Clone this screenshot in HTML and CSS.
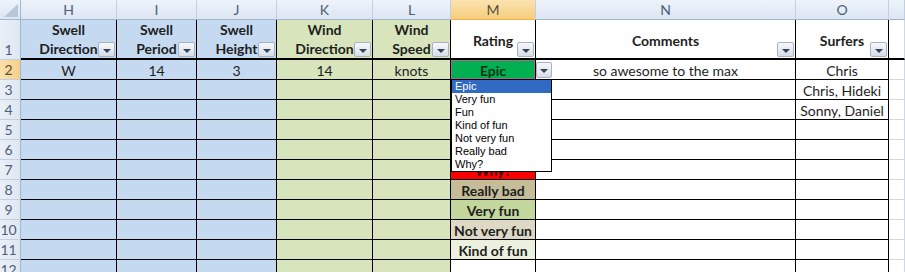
FILE: index.html
```html
<!DOCTYPE html>
<html>
<head>
<meta charset="utf-8">
<link rel="stylesheet" href="styles.css">
</head>
<body>
<div class="sheet">
  <div class="row hdr">
    <div class="corner"><span class="tri"></span></div>
    <div class="ch">H</div>
    <div class="ch">I</div>
    <div class="ch">J</div>
    <div class="ch">K</div>
    <div class="ch">L</div>
    <div class="ch active">M</div>
    <div class="ch">N</div>
    <div class="ch">O</div>
    <div class="ch"></div>
  </div>

  <div class="row r1">
    <div class="rh">1</div>
    <div class="c th blue"><span>Swell<br>Direction</span><i class="fb"></i></div>
    <div class="c th blue"><span>Swell<br>Period</span><i class="fb"></i></div>
    <div class="c th blue"><span>Swell<br>Height</span><i class="fb"></i></div>
    <div class="c th green"><span>Wind<br>Direction</span><i class="fb"></i></div>
    <div class="c th green"><span>Wind<br>Speed</span><i class="fb"></i></div>
    <div class="c th one"><span>Rating</span><i class="fb"></i></div>
    <div class="c th one"><span>Comments</span><i class="fb"></i></div>
    <div class="c th one"><span>Surfers</span><i class="fb"></i></div>
    <div class="g"></div>
  </div>

  <div class="row">
    <div class="rh active">2</div>
    <div class="c blue">W</div>
    <div class="c blue">14</div>
    <div class="c blue">3</div>
    <div class="c green">14</div>
    <div class="c green">knots</div>
    <div class="c sel epic">Epic
      <i class="vb"></i>
      <ul class="dd">
        <li class="hl">Epic</li>
        <li>Very fun</li>
        <li>Fun</li>
        <li>Kind of fun</li>
        <li>Not very fun</li>
        <li>Really bad</li>
        <li>Why?</li>
      </ul>
    </div>
    <div class="c">so awesome to the max</div>
    <div class="c">Chris</div>
    <div class="g"></div>
  </div>

  <div class="row">
    <div class="rh">3</div>
    <div class="c blue"></div><div class="c blue"></div><div class="c blue"></div>
    <div class="c green"></div><div class="c green"></div>
    <div class="c r"></div><div class="c"></div>
    <div class="c">Chris, Hideki</div>
    <div class="g"></div>
  </div>

  <div class="row">
    <div class="rh">4</div>
    <div class="c blue"></div><div class="c blue"></div><div class="c blue"></div>
    <div class="c green"></div><div class="c green"></div>
    <div class="c r"></div><div class="c"></div>
    <div class="c">Sonny, Daniel</div>
    <div class="g"></div>
  </div>

  <div class="row">
    <div class="rh">5</div>
    <div class="c blue"></div><div class="c blue"></div><div class="c blue"></div>
    <div class="c green"></div><div class="c green"></div>
    <div class="c r"></div><div class="c"></div><div class="c"></div>
    <div class="g"></div>
  </div>

  <div class="row">
    <div class="rh">6</div>
    <div class="c blue"></div><div class="c blue"></div><div class="c blue"></div>
    <div class="c green"></div><div class="c green"></div>
    <div class="c r"></div><div class="c"></div><div class="c"></div>
    <div class="g"></div>
  </div>

  <div class="row">
    <div class="rh">7</div>
    <div class="c blue"></div><div class="c blue"></div><div class="c blue"></div>
    <div class="c green"></div><div class="c green"></div>
    <div class="c r why">Why?</div><div class="c"></div><div class="c"></div>
    <div class="g"></div>
  </div>

  <div class="row">
    <div class="rh">8</div>
    <div class="c blue"></div><div class="c blue"></div><div class="c blue"></div>
    <div class="c green"></div><div class="c green"></div>
    <div class="c r bad">Really bad</div><div class="c"></div><div class="c"></div>
    <div class="g"></div>
  </div>

  <div class="row">
    <div class="rh">9</div>
    <div class="c blue"></div><div class="c blue"></div><div class="c blue"></div>
    <div class="c green"></div><div class="c green"></div>
    <div class="c r vfun">Very fun</div><div class="c"></div><div class="c"></div>
    <div class="g"></div>
  </div>

  <div class="row">
    <div class="rh">10</div>
    <div class="c blue"></div><div class="c blue"></div><div class="c blue"></div>
    <div class="c green"></div><div class="c green"></div>
    <div class="c r nvfun">Not very fun</div><div class="c"></div><div class="c"></div>
    <div class="g"></div>
  </div>

  <div class="row">
    <div class="rh">11</div>
    <div class="c blue"></div><div class="c blue"></div><div class="c blue"></div>
    <div class="c green"></div><div class="c green"></div>
    <div class="c r kfun">Kind of fun</div><div class="c"></div><div class="c"></div>
    <div class="g"></div>
  </div>

  <div class="row">
    <div class="rh">12</div>
    <div class="c blue"></div><div class="c blue"></div><div class="c blue"></div>
    <div class="c green"></div><div class="c green"></div>
    <div class="c"></div><div class="c"></div><div class="c"></div>
    <div class="g"></div>
  </div>
</div>
</body>
</html>
```

FILE: styles.css
```css
* { box-sizing: border-box; }
html, body { margin: 0; padding: 0; background: #fff; }
body { width: 905px; height: 272px; overflow: hidden; }

.sheet {
  font-family: Lato, "Liberation Sans", sans-serif;
  font-size: 14px;
  color: #1e1e1e;
}

.row {
  display: grid;
  grid-template-columns: 21px 96px 80px 80px 96px 78px 85px 260px 93px 16px;
  height: 20px;
}
.row.r1 { height: 40px; }

/* column header row */
.hdr .ch, .corner {
  background: linear-gradient(#eef3fa, #dce6f2);
  border-right: 1px solid #c3cfdf;
  border-bottom: 1px solid #9eb6ce;
  color: #4d5e78;
  font-size: 14px;
  display: flex;
  align-items: center;
  justify-content: center;
}
.hdr .ch.active {
  background: linear-gradient(#fbe3b0, #f6cd7c);
  border-bottom-color: #f2b44a;
  color: #56503f;
}
.corner { position: relative; border-right-color: #9eb6ce; }
.tri {
  position: absolute;
  right: 2px;
  bottom: 2px;
  width: 0;
  height: 0;
  border-left: 14px solid transparent;
  border-bottom: 13px solid #b7c6d9;
}

/* row headers */
.rh {
  background: linear-gradient(90deg, #eaf0f8, #dfe7f2);
  border-right: 1px solid #9eb6ce;
  border-bottom: 1px solid #c3cfdf;
  color: #4d5e78;
  font-size: 14px;
  line-height: 18px;
  display: flex;
  align-items: flex-end;
  justify-content: center;
  padding-right: 3px;
}
.rh.active { background: linear-gradient(90deg, #fbe0a8, #f7d08a); color: #56503f; }

/* cells */
.c {
  border-right: 1px solid #000;
  border-bottom: 1px solid #000;
  display: flex;
  align-items: center;
  justify-content: center;
  white-space: nowrap;
  position: relative;
  padding-top: 1px;
}
.g {
  border-right: 1px solid #d0d7e5;
  border-bottom: 1px solid #d0d7e5;
}
.r1 .g { border-bottom: 2px solid #000; }

.blue { background: #c5d9f1; }
.green { background: #d8e4bc; }

.th {
  border-bottom-width: 2px;
  font-weight: bold;
  line-height: 19px;
  text-align: center;
  padding-top: 0;
}
.th.one { padding-top: 2px; }

/* filter buttons */
.fb {
  position: absolute;
  right: 1px;
  bottom: 1px;
  width: 17px;
  height: 15px;
  border: 1px solid #a7b2c2;
  border-radius: 2px;
  background: linear-gradient(#f7f8fa, #d7dde6);
}
.fb::after, .vb::after {
  content: "";
  position: absolute;
  left: 50%;
  top: 50%;
  margin-left: -4px;
  margin-top: -1px;
  border-left: 4px solid transparent;
  border-right: 4px solid transparent;
  border-top: 4px solid #34425c;
}

/* selected cell */
.sel {
  box-shadow: inset 0 0 0 1px #a86a8c;
}
.epic {
  background: #00b050;
  font-weight: bold;
  color: #10301a;
}
.vb {
  position: absolute;
  left: 85px;
  top: 2px;
  width: 16px;
  height: 16px;
  border: 1px solid #a7b2c2;
  border-radius: 2px;
  background: linear-gradient(#f7f8fa, #d7dde6);
  z-index: 6;
}

/* dropdown list */
.dd {
  position: absolute;
  left: 0;
  top: 100%;
  width: 101px;
  margin: 0;
  padding: 0;
  list-style: none;
  background: #fff;
  border: 1px solid #000;
  z-index: 5;
  font-family: "Liberation Sans", Arial, sans-serif;
  font-size: 11px;
  font-weight: normal;
  color: #000;
  text-align: left;
}
.dd li {
  height: 13px;
  line-height: 13px;
  padding-left: 3px;
}
.dd li.hl { background: #316ac5; color: #fff; }

/* rating fills */
.r { font-weight: bold; }
.why { background: #ff0000; color: #3a0505; }
.bad { background: #c4bd97; }
.vfun { background: #c3d69b; }
.nvfun { background: #ddd9c4; }
.kfun { background: #ebf1de; }
```
